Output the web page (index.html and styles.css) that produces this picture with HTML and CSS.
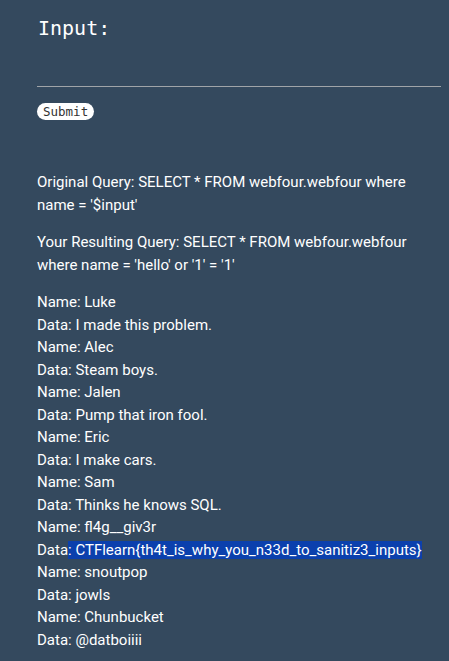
FILE: index.html
```html
<!DOCTYPE html>
<html>
<head>
<meta charset="utf-8">
<link rel="stylesheet" href="styles.css">
</head>
<body>
<div class="wrap">
  <form class="form">
    <label class="label">Input:</label>
    <div class="field"></div>
    <button type="button" class="submit">Submit</button>
  </form>
  <div class="results">
    <p>Original Query: SELECT * FROM webfour.webfour where name = '$input'</p>
    <p>Your Resulting Query: SELECT * FROM webfour.webfour where name = 'hello' or '1' = '1'</p>
    <p>Name: Luke<br>Data: I made this problem.<br>Name: Alec<br>Data: Steam boys.<br>Name: Jalen<br>Data: Pump that iron fool.<br>Name: Eric<br>Data: I make cars.<br>Name: Sam<br>Data: Thinks he knows SQL.<br>Name: fl4g__giv3r<br>Data<span class="sel">: CTFlearn{th4t_is_why_you_n33d_to_sanitiz3_inputs}</span><br>Name: snoutpop<br>Data: jowls<br>Name: Chunbucket<br>Data: @datboiiii</p>
  </div>
</div>
</body>
</html>
```

FILE: styles.css
```css
html, body {
  margin: 0;
  padding: 0;
  background: #34495e;
}
body {
  color: #ffffff;
  font-family: Roboto, "Liberation Sans", sans-serif;
  font-size: 15px;
  line-height: 22.5px;
}
.wrap {
  padding: 0 8px 0 37px;
}
.form {
  display: flex;
  flex-direction: column;
  align-items: flex-start;
  padding-top: 14px;
}
.label {
  font-family: "DejaVu Sans Mono", monospace;
  font-size: 20px;
  line-height: 28px;
  padding-left: 1px;
}
.field {
  align-self: stretch;
  height: 44px;
  border-bottom: 1px solid #a0a4a8;
}
.submit {
  margin-top: 16px;
  font-family: "DejaVu Sans Mono", monospace;
  font-size: 12.5px;
  line-height: 15px;
  color: #333;
  background: #fff;
  border: none;
  border-radius: 9px;
  padding: 1px 6px;
  height: 17px;
}
.results {
  padding-top: 51px;
}
.results p {
  margin: 0 0 15px 0;
}
.sel {
  background: #0b40ad;
}
```
